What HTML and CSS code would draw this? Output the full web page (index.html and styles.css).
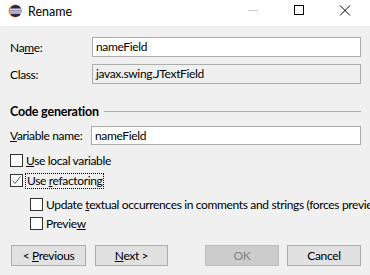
FILE: index.html
```html
<!DOCTYPE html>
<html lang="en">
  <head>
    <meta charset="UTF-8" />
    <title>Rename</title>
    <link rel="stylesheet" href="styles.css">
  </head>
  <body>
    <div class="dialog">
      <!-- title bar -->
      <div class="titlebar">
        <svg class="app-icon" width="14" height="14" viewBox="0 0 14 14">
          <circle cx="7" cy="7" r="6.5" fill="#f7941e" />
          <circle cx="7.6" cy="7" r="6" fill="#2c2255" />
          <rect x="2" y="4.6" width="11" height="1.2" fill="#fff" />
          <rect x="1.6" y="6.5" width="12" height="1.2" fill="#fff" />
          <rect x="2" y="8.4" width="11" height="1.2" fill="#fff" />
        </svg>
        <span class="title">Rename</span>
        <div class="controls">
          <svg class="ctl" width="46" height="26" viewBox="0 0 46 26">
            <line x1="18" y1="10.5" x2="28" y2="10.5" stroke="#c8c8c8" stroke-width="1" />
          </svg>
          <svg class="ctl" width="46" height="26" viewBox="0 0 46 26">
            <rect x="18.5" y="5.5" width="9" height="9" fill="none" stroke="#000" stroke-width="1" />
          </svg>
          <svg class="ctl" width="46" height="26" viewBox="0 0 46 26">
            <path d="M18 5.5 L28 15.5 M28 5.5 L18 15.5" stroke="#000" stroke-width="1" />
          </svg>
        </div>
      </div>

      <div class="content">
        <div class="row name-row">
          <label class="lbl">Na<u>m</u>e:</label>
          <div class="field">nameField</div>
        </div>
        <div class="row class-row">
          <label class="lbl">Class:</label>
          <div class="field readonly">javax.swing.JTextField</div>
        </div>

        <div class="group-head">
          <span>Code generation</span>
          <div class="rule"></div>
        </div>

        <div class="row var-row">
          <label class="lbl lbl-var"><u>V</u>ariable name:</label>
          <div class="field">nameField</div>
        </div>

        <div class="check first">
          <span class="box"></span>
          <span><u>U</u>se local variable</span>
        </div>
        <div class="check second">
          <span class="box">
            <svg width="11" height="11" viewBox="0 0 11 11">
              <path d="M1.5 5.5 L4 8.5 L9.5 1.5" fill="none" stroke="#555" stroke-width="1" />
            </svg>
          </span>
          <span class="focus">Use <u>r</u>efactoring</span>
        </div>
        <div class="check sub third">
          <span class="box"></span>
          <span class="clip">Update <u>t</u>extual occurrences in comments and strings (forces preview)</span>
        </div>
        <div class="check sub fourth">
          <span class="box"></span>
          <span>Previe<u>w</u></span>
        </div>

        <div class="buttons">
          <div class="btn">&lt; <u>P</u>revious</div>
          <div class="btn btn-next"><u>N</u>ext &gt;</div>
          <div class="spacer"></div>
          <div class="btn disabled">OK</div>
          <div class="btn btn-cancel">Cancel</div>
        </div>
      </div>
    </div>
  </body>
</html>
```

FILE: styles.css
```css
html, body {
  margin: 0;
  padding: 0;
}
body {
  width: 370px;
  height: 275px;
  overflow: hidden;
  background-color: #f0f0f0;
  font-family: Lato, "Noto Sans", sans-serif;
  font-size: 12px;
  letter-spacing: -0.35px;
  color: #000;
}
.dialog {
  width: 370px;
  height: 275px;
  overflow: hidden;
}
.titlebar {
  height: 26px;
  background-color: #ffffff;
  display: flex;
  align-items: center;
}
.app-icon {
  margin-left: 8px;
  margin-top: -4px;
}
.title {
  margin-left: 6px;
  margin-top: -4px;
  font-size: 12.5px;
  letter-spacing: 0;
}
.controls {
  margin-left: auto;
  display: flex;
  margin-right: 2px;
}
.ctl {
  display: block;
}
.content {
  padding: 0 9px 0 10px;
}
.row {
  display: flex;
  align-items: center;
  height: 20px;
}
.name-row {
  margin-top: 11px;
}
.class-row {
  margin-top: 7px;
}
.var-row {
  margin-top: 7px;
  height: 19px;
}
.lbl {
  width: 82px;
  flex-shrink: 0;
}
.lbl-var {
  width: 81px;
}
.field {
  flex: 1;
  height: 100%;
  box-sizing: border-box;
  border: 1px solid #adadad;
  background-color: #ffffff;
  padding-left: 3px;
  line-height: 17px;
}
.field.readonly {
  background-color: #f0f0f0;
}
.group-head {
  display: flex;
  align-items: center;
  margin-top: 19px;
  height: 16px;
  font-weight: bold;
  font-size: 12.5px;
  letter-spacing: -0.2px;
}
.rule {
  flex: 1;
  height: 1px;
  background-color: #adadad;
  margin-left: 5px;
  margin-top: 1px;
}
.check {
  display: flex;
  align-items: center;
  height: 15px;
  white-space: nowrap;
}
.check.first {
  margin-top: 8px;
}
.check.second {
  margin-top: 5px;
}
.check.third {
  margin-top: 9px;
  margin-right: -9px;
}
.check.fourth {
  margin-top: 4px;
}
.check.sub {
  padding-left: 20px;
}
.clip {
  overflow: hidden;
  flex: 1;
}
.box {
  width: 13px;
  height: 13px;
  box-sizing: border-box;
  border: 1px solid #333;
  background-color: #fff;
  margin-right: 3px;
  flex-shrink: 0;
  display: flex;
  align-items: center;
  justify-content: center;
}
.box svg {
  display: block;
}
.focus {
  outline: 1px dotted #000;
  padding: 0 1px;
  line-height: 14px;
}
.buttons {
  display: flex;
  margin-top: 14px;
  padding-left: 1px;
}
.btn {
  width: 75px;
  height: 21px;
  box-sizing: border-box;
  border: 1px solid #adadad;
  background-color: #e1e1e1;
  text-align: center;
  line-height: 19px;
}
.btn-next {
  margin-left: 9px;
  width: 73px;
}
.btn-cancel {
  margin-left: 8px;
  width: 74px;
}
.spacer {
  flex: 1;
}
.btn.disabled {
  background-color: #cccccc;
  border-color: #bfbfbf;
  color: #838383;
  width: 74px;
}
```
